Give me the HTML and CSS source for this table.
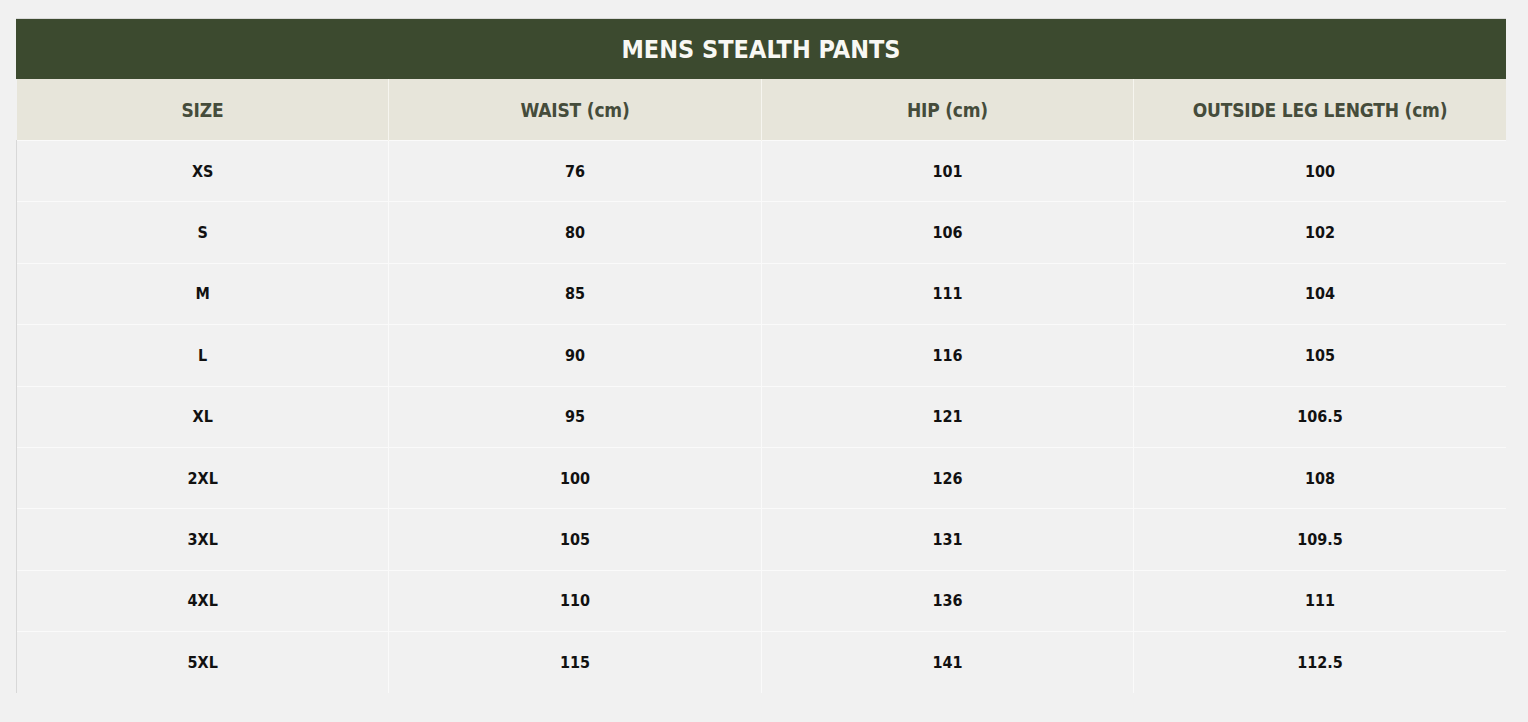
FILE: index.html
```html
<!DOCTYPE html>
<html lang="en">
<head>
<meta charset="utf-8">
<title>Mens Stealth Pants Size Chart</title>
<link rel="stylesheet" href="styles.css">
</head>
<body>
<div class="chart">
  <div class="title">MENS STEALTH PANTS</div>
  <table class="sizes">
    <thead>
      <tr><th>SIZE</th><th>WAIST (cm)</th><th>HIP (cm)</th><th>OUTSIDE LEG LENGTH (cm)</th></tr>
    </thead>
    <tbody>
      <tr><td>XS</td><td>76</td><td>101</td><td>100</td></tr>
      <tr><td>S</td><td>80</td><td>106</td><td>102</td></tr>
      <tr><td>M</td><td>85</td><td>111</td><td>104</td></tr>
      <tr><td>L</td><td>90</td><td>116</td><td>105</td></tr>
      <tr><td>XL</td><td>95</td><td>121</td><td>106.5</td></tr>
      <tr><td>2XL</td><td>100</td><td>126</td><td>108</td></tr>
      <tr><td>3XL</td><td>105</td><td>131</td><td>109.5</td></tr>
      <tr><td>4XL</td><td>110</td><td>136</td><td>111</td></tr>
      <tr><td>5XL</td><td>115</td><td>141</td><td>112.5</td></tr>
    </tbody>
  </table>
</div>
</body>
</html>
```
FILE: styles.css
```css
html, body {
  margin: 0;
  padding: 0;
  background: #f1f1f1;
}
body {
  padding: 18px 22px 0 16px;
  font-family: "DejaVu Sans Condensed", "DejaVu Sans", sans-serif;
}
.chart {
  width: 1490px;
  border-top: 1px solid #d9d9d9;
}
.title {
  background: #3c4a2f;
  color: #f8f8f4;
  height: 60px;
  display: flex;
  align-items: center;
  justify-content: center;
  font-size: 25px;
  font-weight: bold;
}
.sizes {
  width: 100%;
  border-collapse: collapse;
  table-layout: fixed;
}
.sizes th {
  background: #e7e5da;
  color: #454c3b;
  height: 61px;
  font-size: 19px;
  font-weight: bold;
  padding: 0;
  letter-spacing: -0.2px;
  border-left: 1px solid #f6f5ef;
}
.sizes td {
  height: 60.4px;
  text-align: center;
  font-size: 16px;
  font-weight: bold;
  color: #111111;
  padding: 0;
  border-top: 1px solid #fafafa;
  border-left: 1px solid #fafafa;
}
.sizes th:first-child {
  border-left: none;
}
.sizes td:first-child {
  border-left: 1px solid #d8d8d8;
}
```
